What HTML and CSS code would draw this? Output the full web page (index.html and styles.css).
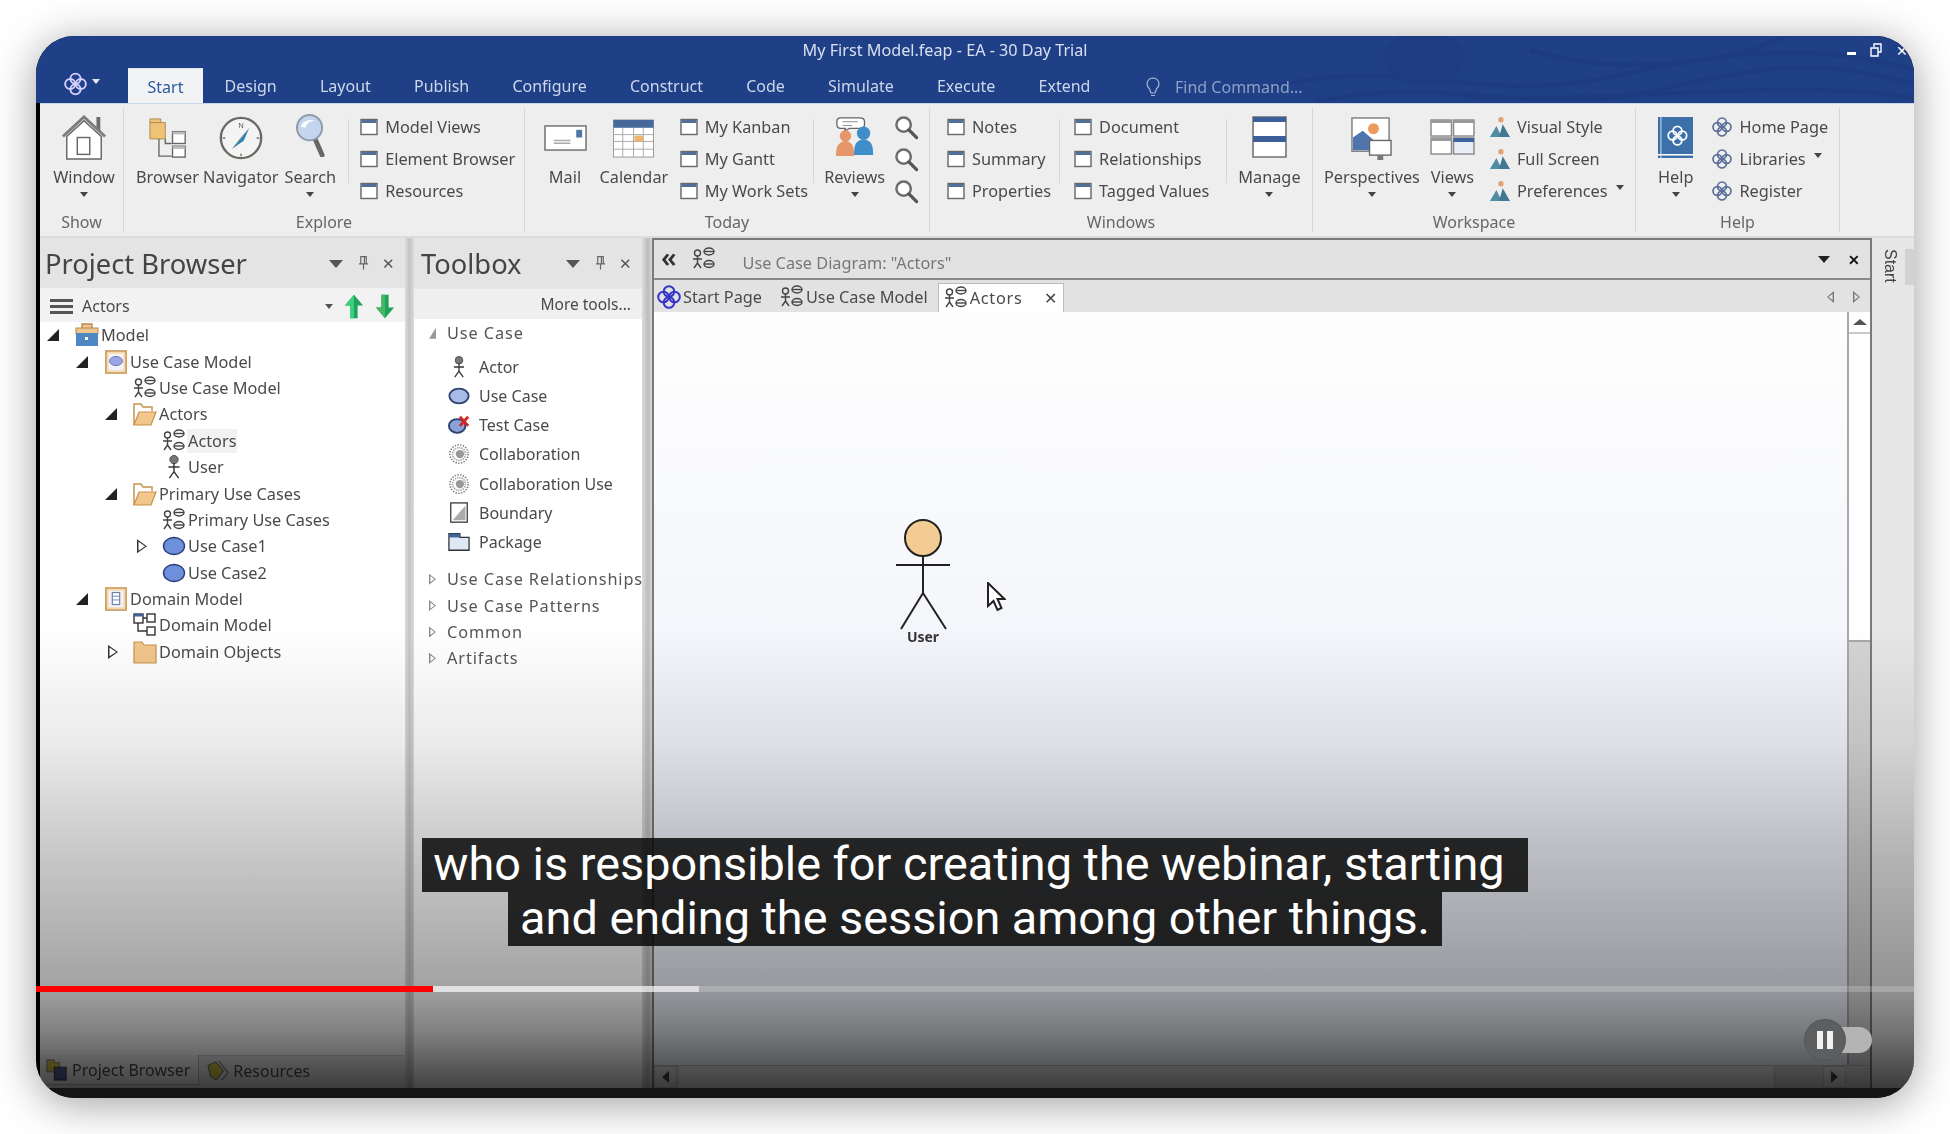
FILE: index.html
```html
<!DOCTYPE html>
<html lang="en">
<head>
<meta charset="utf-8">
<title>My First Model.feap - EA - 30 Day Trial</title>
<link rel="stylesheet" href="styles.css">
</head>
<body>
<svg class="sprite" xmlns="http://www.w3.org/2000/svg">
  <symbol id="logo" viewBox="0 0 24 24"><g fill="none" stroke="currentColor" stroke-width="2"><circle cx="12" cy="6.500" r="5.300"/><circle cx="17.500" cy="12" r="5.300"/><circle cx="12" cy="17.500" r="5.300"/><circle cx="6.500" cy="12" r="5.300"/></g></symbol>
  <symbol id="win" viewBox="0 0 18 18"><rect x="1" y="1.500" width="16" height="15" fill="#fff" stroke="#666" stroke-width="1.400"/><rect x="1.500" y="2" width="15" height="3" fill="#536f98"/></symbol>
  <symbol id="house" viewBox="0 0 48 48" preserveAspectRatio="none"><path d="M37 14V2h4v16z" fill="#6d6d6d"/><path d="M2 23 24 2 46 23" fill="none" stroke="#7d7d7d" stroke-width="3"/><path d="M6 23 24 6 42 23v24H6z" fill="#fff" stroke="#666" stroke-width="1.500"/><rect x="17" y="24" width="13" height="18" fill="#fff" stroke="#666" stroke-width="1.500"/></symbol>
  <symbol id="browser" viewBox="0 0 42 44" preserveAspectRatio="none"><path d="M1 1h12v4h5v18H1z" fill="#efc377" stroke="#a8854a"/><path d="M1 5h12" stroke="#a8854a"/><path d="M11 23v19h14M18 23v5h7" fill="none" stroke="#666" stroke-width="1.500"/><rect x="26" y="15" width="14" height="13" fill="#fff" stroke="#666" stroke-width="1.500"/><rect x="26" y="15" width="14" height="3" fill="#bbb"/><rect x="26" y="31" width="14" height="12" fill="#fff" stroke="#666" stroke-width="1.500"/><rect x="26" y="31" width="14" height="3" fill="#bbb"/></symbol>
  <symbol id="lens" viewBox="0 0 30 44" preserveAspectRatio="none"><path d="M20 26 27 42" stroke="#666" stroke-width="5" stroke-linecap="round"/><ellipse cx="14" cy="14" rx="13" ry="13" fill="#c4d6ee" stroke="#8f9aaa" stroke-width="2"/><path d="M5 13c2-6 9-8 15-6-5 0-9 2-10 7z" fill="#fff"/></symbol>
  <symbol id="mag" viewBox="0 0 26 26"><circle cx="10" cy="10" r="7.500" fill="#fff" stroke="#6d6d6d" stroke-width="2.600"/><path d="m15.500 15.500 8 8" stroke="#555" stroke-width="3.400" stroke-linecap="round"/></symbol>
  <symbol id="mail" viewBox="0 0 44 27" preserveAspectRatio="none"><rect x="1" y="1" width="42" height="25" fill="#fff" stroke="#777" stroke-width="1.600"/><rect x="33" y="5" width="6" height="8" fill="#4f74a8"/><path d="M10 16h17M10 19h17" stroke="#aaa" stroke-width="1.500"/></symbol>
  <symbol id="cal" viewBox="0 0 42 40" preserveAspectRatio="none"><rect x=".5" y="1" width="41" height="38" fill="#fff" stroke="#999"/><rect x=".5" y="1" width="41" height="8" fill="#46699c"/><path d="M.5 16h41M.5 23h41M.5 31h41M10 9v30M21 9v30M31 9v30" stroke="#aaa"/><rect x="22" y="17" width="9" height="6" fill="#eeb46c"/></symbol>
  <symbol id="reviews" viewBox="0 0 42 42" preserveAspectRatio="none"><path d="M6 1h20c3 0 5 1 5 4v3c0 3-2 4-5 4H15l-5 3 1-3H6c-2 0-4-1-4-4V5c0-3 2-4 4-4z" fill="#fff" stroke="#666" stroke-width="1.400"/><path d="M8 5h16M8 9h10" stroke="#888"/><circle cx="11" cy="20" r="6" fill="#e6966a"/><path d="M1 41c0-10 2-14 10-16 8 2 9 6 9 16z" fill="#e6966a"/><circle cx="30" cy="17" r="7" fill="#3f8ec9"/><path d="M20 40c0-12 2-15 10-17 8 2 10 5 10 17z" fill="#3f8ec9"/></symbol>
  <symbol id="manage" viewBox="0 0 34 42" preserveAspectRatio="none"><rect x="1" y="1" width="32" height="40" fill="#fff" stroke="#666" stroke-width="1.400"/><rect x="1" y="1" width="32" height="5" fill="#3d5f99"/><rect x="1" y="20" width="32" height="6" fill="#3d5f99"/></symbol>
  <symbol id="persp" viewBox="0 0 42 44" preserveAspectRatio="none"><rect x="1" y="1" width="38" height="34" fill="#fff" stroke="#777" stroke-width="1.400"/><circle cx="23" cy="12" r="5.600" fill="#eb995c"/><path d="M2 34V21l10-7 14 12v8z" fill="#4f74ad"/><rect x="19" y="24" width="22" height="15" fill="#fff" stroke="#666" stroke-width="1.400"/><rect x="27" y="39" width="6" height="5" fill="#777"/></symbol>
  <symbol id="views" viewBox="0 0 44 36" preserveAspectRatio="none"><g fill="#fff" stroke="#888" stroke-width="1.400"><rect x="1" y="1" width="20" height="16"/><rect x="23" y="1" width="20" height="16"/><rect x="1" y="19" width="20" height="16"/><rect x="23" y="19" width="20" height="16" fill="#e7eef8"/></g><g fill="#999"><rect x="1" y="1" width="20" height="3"/><rect x="23" y="1" width="20" height="3"/><rect x="1" y="19" width="20" height="3"/></g><rect x="23" y="19" width="20" height="4" fill="#3f639b"/></symbol>
  <symbol id="mount" viewBox="0 0 22 24"><circle cx="12" cy="4" r="3" fill="#e6a27a"/><path d="M0 23 7 11l6 12z" fill="#4e8da3"/><path d="M10 23 14 9l8 14z" fill="#3f7890"/></symbol>
  <symbol id="book" viewBox="0 0 36 42" preserveAspectRatio="none"><rect x="0" y="0" width="36" height="38" fill="#3d6fa8"/><rect x="0" y="38" width="36" height="1.500" fill="#fff"/><rect x="0" y="39.500" width="36" height="2.500" fill="#3d6fa8"/><rect x="2.500" y="0" width="1" height="42" fill="#d5e0ee"/><g fill="none" stroke="#fff" stroke-width="1.800"><circle cx="20" cy="14" r="4.500"/><circle cx="25" cy="19" r="4.500"/><circle cx="20" cy="24" r="4.500"/><circle cx="15" cy="19" r="4.500"/></g></symbol>
  <symbol id="pkg-model" viewBox="0 0 24 24"><path d="M7 5V1h10v4" fill="#edc78f" stroke="#b98a4e" stroke-width="1.400"/><rect x="1" y="5" width="22" height="6" fill="#edc78f" stroke="#b98a4e"/><rect x="1" y="10" width="22" height="13" fill="#4d88c2"/><rect x="10" y="14" width="3" height="3" fill="#fff"/></symbol>
  <symbol id="pkg-uc" viewBox="0 0 24 26"><rect x="1" y="1" width="22" height="24" fill="#f5d9ad" stroke="#c5965a" stroke-width="1.600"/><rect x="4" y="4" width="16" height="18" fill="#f4f4f8"/><ellipse cx="12" cy="12" rx="7" ry="5" fill="#9aa6e4" stroke="#6675bf"/></symbol>
  <symbol id="pkg-dm" viewBox="0 0 24 26"><rect x="1" y="1" width="22" height="24" fill="#f5d9ad" stroke="#c5965a" stroke-width="1.600"/><rect x="4" y="4" width="16" height="18" fill="#f4f4f8"/><rect x="8" y="6" width="8" height="13" fill="#fff" stroke="#6f82a9" stroke-width="1.300"/><path d="M8 10h8M8 14h8" stroke="#6f82a9"/></symbol>
  <symbol id="ucd" viewBox="0 0 24 24"><g fill="none" stroke="#444" stroke-width="1.400"><circle cx="5.500" cy="6" r="3"/><path d="M5.500 9v7M1 12h9M5.500 16 2 21M5.500 16 9 21"/><ellipse cx="17" cy="4.500" rx="5" ry="3.500"/><path d="M12 4.500h10"/><ellipse cx="17" cy="17" rx="5" ry="3.500"/><path d="M12 17h10"/></g></symbol>
  <symbol id="fold-open" viewBox="0 0 24 24"><path d="M1 23V2h7l2 3h9v4" fill="#fff" stroke="#c6924f" stroke-width="1.500"/><path d="M1 23 6 10h17l-5 13z" fill="#f2c68c" stroke="#c6924f" stroke-width="1.200"/></symbol>
  <symbol id="fold" viewBox="0 0 24 24"><path d="M1 23V2h8l2 3h12v18z" fill="#f2c68c" stroke="#c6924f" stroke-width="1.200"/></symbol>
  <symbol id="actor" viewBox="0 0 16 26"><circle cx="8" cy="5" r="4.500" fill="#777" stroke="#444"/><path d="M8 9v9M2 13h12M8 18 3 25M8 18l5 7" fill="none" stroke="#333" stroke-width="1.500"/></symbol>
  <symbol id="usecase" viewBox="0 0 24 20"><ellipse cx="12" cy="10" rx="10.500" ry="8.500" fill="#6e8fdc" stroke="#2a3b7a" stroke-width="1.400"/></symbol>
  <symbol id="usecase2" viewBox="0 0 24 20"><ellipse cx="12" cy="10" rx="10.500" ry="8" fill="#a8bbe6" stroke="#2c3f6e" stroke-width="2"/></symbol>
  <symbol id="testcase" viewBox="0 0 24 20"><ellipse cx="10" cy="11" rx="9" ry="7.500" fill="#8ca2d6" stroke="#2c3f6e" stroke-width="2"/><path d="m13 1 9 10M22 1l-9 10" stroke="#d42424" stroke-width="3"/></symbol>
  <symbol id="collab" viewBox="0 0 24 24"><circle cx="12" cy="12" r="10" fill="none" stroke="#777" stroke-width="1.600" stroke-dasharray="1.500 1.500"/><circle cx="12" cy="12" r="7" fill="none" stroke="#aaa" stroke-width="2" stroke-dasharray="1.500 1"/><circle cx="13" cy="12" r="4.500" fill="#999"/></symbol>
  <symbol id="bound" viewBox="0 0 20 24"><rect x="1" y="1" width="18" height="21" fill="#fff" stroke="#444" stroke-width="1.500"/><path d="M3 20 17 4v16z" fill="#aaa"/></symbol>
  <symbol id="pkg" viewBox="0 0 24 20"><path d="M1 1h12v4h10v14H1z" fill="#dfe8f5" stroke="#333" stroke-width="1.400"/><rect x="1" y="1" width="12" height="4" fill="#3f639b"/></symbol>
  <symbol id="dmd" viewBox="0 0 24 24"><g fill="#fff" stroke="#333" stroke-width="1.400"><rect x="1" y="1" width="9" height="9"/><rect x="14" y="1" width="8" height="8"/><rect x="14" y="14" width="8" height="8"/><path d="M5 10v8h9M10 5h4" fill="none"/></g><rect x="1" y="1" width="9" height="2.500" fill="#3f639b"/></symbol>
  <symbol id="up" viewBox="0 0 22 28"><path d="M11 1 21 13h-6v14H7V13H1z" fill="#1fa35a"/><path d="M11 1 1 13h6v14h4z" fill="#3bd07f"/></symbol>
  <symbol id="down" viewBox="0 0 22 28"><path d="M11 27 21 15h-6V1H7v14H1z" fill="#1fa35a"/><path d="M7 1v14H1l10 12V1z" fill="#46b866"/></symbol>
  <symbol id="pb" viewBox="0 0 24 24"><path d="M1 1h8v3h6v10H1z" fill="#d6c94a" stroke="#777"/><rect x="9" y="9" width="13" height="14" fill="#55609a" stroke="#333"/></symbol>
  <symbol id="res" viewBox="0 0 24 24"><path d="M1 6 10 2l8 10-8 10-6-4z" fill="#d6c94a" stroke="#555"/><path d="M13 1 23 14l-7 8" fill="none" stroke="#888" stroke-width="1.500"/></symbol>
</svg>

<main class="window">
  <header class="titlebar">
    <svg class="waves" viewBox="0 0 600 66" preserveAspectRatio="none"><g fill="none" stroke="#1c3b80" stroke-width="4"><path d="M0 50C120 20 200 70 320 40S520 10 600 34"/><path d="M40 66C160 36 240 84 360 54S520 26 600 48"/><path d="M240 14C320 40 420 30 480 0"/><path d="M180 60C300 70 480 40 600 62"/></g><ellipse cx="141" cy="22" rx="38" ry="28" fill="#1d3c82"/></svg>
    <div class="title-text">My First Model.feap - EA - 30 Day Trial</div>
    <div class="win-controls">
      <span class="wc-min"></span>
      <svg class="wc-res" viewBox="0 0 12 14"><path d="M4 4V1h7v8H8M1 5h7v8H1z" fill="none" stroke="#fff" stroke-width="1.400"/></svg>
      <span class="wc-x">✕</span>
    </div>
    <nav class="menu">
      <div class="app-btn"><svg class="app-logo"><use href="#logo"/></svg><span class="caret-w"></span></div>
      <a class="tab active">Start</a><a class="tab">Design</a><a class="tab">Layout</a><a class="tab">Publish</a><a class="tab">Configure</a><a class="tab">Construct</a><a class="tab">Code</a><a class="tab">Simulate</a><a class="tab">Execute</a><a class="tab">Extend</a>
      <div class="find">
        <svg class="bulb" viewBox="0 0 14 20"><path d="M7 1a6 6 0 0 0-3.500 10.800L5 16h4l1.500-4.200A6 6 0 0 0 7 1zM5 18.500h4" fill="none" stroke="#a8b8d6" stroke-width="1.200"/></svg>
        <span>Find Command...</span>
      </div>
    </nav>
  </header>

  <div class="app">
    <section class="ribbon">
      <div class="group g-show">
        <div class="gbody">
          <div class="big"><svg class="bi i-house"><use href="#house"/></svg><span>Window</span><i class="caret"></i></div>
        </div>
        <div class="glabel">Show</div>
      </div>
      <div class="group g-explore">
        <div class="gbody">
          <div class="big"><svg class="bi i-browser"><use href="#browser"/></svg><span>Browser</span></div>
          <div class="big"><svg class="bi i-compass" viewBox="0 0 48 48"><circle cx="24" cy="24" r="22" fill="#f4f4f4" stroke="#6b6b64" stroke-width="2.600"/><text x="24" y="13" font-size="8" text-anchor="middle" fill="#555" font-family="Noto Sans">N</text><path d="M33 13 23 24 14 36z" fill="#e6a23a"/><path d="M33 13 27 27 14 36z" fill="#2f86b5"/><path d="M4 24h3M41 24h3M24 41v3" stroke="#777" stroke-width="1.500"/></svg><span>Navigator</span></div>
          <div class="big"><svg class="bi i-lens"><use href="#lens"/></svg><span>Search</span><i class="caret"></i></div>
          <div class="vsep"></div>
          <div class="col">
            <div class="sm"><svg class="si"><use href="#win"/></svg><span>Model Views</span></div>
            <div class="sm"><svg class="si"><use href="#win"/></svg><span>Element Browser</span></div>
            <div class="sm"><svg class="si"><use href="#win"/></svg><span>Resources</span></div>
          </div>
        </div>
        <div class="glabel">Explore</div>
      </div>
      <div class="group g-today">
        <div class="gbody">
          <div class="big wide"><svg class="bi i-mail"><use href="#mail"/></svg><span>Mail</span></div>
          <div class="big wide"><svg class="bi i-cal"><use href="#cal"/></svg><span>Calendar</span></div>
          <div class="col col-today">
            <div class="sm"><svg class="si"><use href="#win"/></svg><span>My Kanban</span></div>
            <div class="sm"><svg class="si"><use href="#win"/></svg><span>My Gantt</span></div>
            <div class="sm"><svg class="si"><use href="#win"/></svg><span>My Work Sets</span></div>
          </div>
          <div class="vsep sep-today"></div>
          <div class="big"><svg class="bi i-reviews"><use href="#reviews"/></svg><span>Reviews</span><i class="caret"></i></div>
          <div class="col mags">
            <div class="sm"><svg class="mi"><use href="#mag"/></svg></div>
            <div class="sm"><svg class="mi"><use href="#mag"/></svg></div>
            <div class="sm"><svg class="mi"><use href="#mag"/></svg></div>
          </div>
        </div>
        <div class="glabel">Today</div>
      </div>
      <div class="group g-windows">
        <div class="gbody">
          <div class="col">
            <div class="sm"><svg class="si"><use href="#win"/></svg><span>Notes</span></div>
            <div class="sm"><svg class="si"><use href="#win"/></svg><span>Summary</span></div>
            <div class="sm"><svg class="si"><use href="#win"/></svg><span>Properties</span></div>
          </div>
          <div class="vsep sep-win1"></div>
          <div class="col">
            <div class="sm"><svg class="si"><use href="#win"/></svg><span>Document</span></div>
            <div class="sm"><svg class="si"><use href="#win"/></svg><span>Relationships</span></div>
            <div class="sm"><svg class="si"><use href="#win"/></svg><span>Tagged Values</span></div>
          </div>
          <div class="vsep sep-win2"></div>
          <div class="big"><svg class="bi i-manage"><use href="#manage"/></svg><span>Manage</span><i class="caret"></i></div>
        </div>
        <div class="glabel">Windows</div>
      </div>
      <div class="group g-workspace">
        <div class="gbody">
          <div class="big"><svg class="bi i-persp"><use href="#persp"/></svg><span>Perspectives</span><i class="caret"></i></div>
          <div class="big big-views"><svg class="bi i-views"><use href="#views"/></svg><span>Views</span><i class="caret"></i></div>
          <div class="col col-mount">
            <div class="sm"><svg class="si si-m"><use href="#mount"/></svg><span>Visual Style</span></div>
            <div class="sm"><svg class="si si-m"><use href="#mount"/></svg><span>Full Screen</span></div>
            <div class="sm"><svg class="si si-m"><use href="#mount"/></svg><span>Preferences</span><i class="caret caret-sm"></i></div>
          </div>
        </div>
        <div class="glabel">Workspace</div>
      </div>
      <div class="group g-help">
        <div class="gbody">
          <div class="big"><svg class="bi i-book"><use href="#book"/></svg><span>Help</span><i class="caret"></i></div>
          <div class="col col-help">
            <div class="sm"><svg class="si si-l"><use href="#logo"/></svg><span>Home Page</span></div>
            <div class="sm"><svg class="si si-l"><use href="#logo"/></svg><span>Libraries</span><i class="caret caret-sm"></i></div>
            <div class="sm"><svg class="si si-l"><use href="#logo"/></svg><span>Register</span></div>
          </div>
        </div>
        <div class="glabel">Help</div>
      </div>
    </section>

    <section class="workspace">
      <aside class="panel pb">
        <div class="ptitle"><h2>Project Browser</h2><i class="caret caret-lg"></i><svg class="pin" viewBox="0 0 12 16"><path d="M3 1h6v8H3zM1 9h10M6 9v6M7 1v8" fill="none" stroke="#666" stroke-width="1.300"/></svg><span class="px">✕</span></div>
        <div class="pb-bar">
          <span class="burger"></span><span class="pb-name">Actors</span><i class="caret caret-sm2"></i>
          <svg class="arrow"><use href="#up"/></svg><svg class="arrow"><use href="#down"/></svg>
        </div>
        <div class="tree">
          <div class="row l0"><i class="tri open"></i><svg class="ti"><use href="#pkg-model"/></svg><span>Model</span></div>
          <div class="row l1"><i class="tri open"></i><svg class="ti"><use href="#pkg-uc"/></svg><span>Use Case Model</span></div>
          <div class="row l2"><i class="tri"></i><svg class="ti"><use href="#ucd"/></svg><span>Use Case Model</span></div>
          <div class="row l2"><i class="tri open"></i><svg class="ti"><use href="#fold-open"/></svg><span>Actors</span></div>
          <div class="row l3"><i class="tri"></i><svg class="ti"><use href="#ucd"/></svg><span class="sel">Actors</span></div>
          <div class="row l3"><i class="tri"></i><svg class="ti"><use href="#actor"/></svg><span>User</span></div>
          <div class="row l2"><i class="tri open"></i><svg class="ti"><use href="#fold-open"/></svg><span>Primary Use Cases</span></div>
          <div class="row l3"><i class="tri"></i><svg class="ti"><use href="#ucd"/></svg><span>Primary Use Cases</span></div>
          <div class="row l3"><i class="tri closed"></i><svg class="ti"><use href="#usecase"/></svg><span>Use Case1</span></div>
          <div class="row l3"><i class="tri"></i><svg class="ti"><use href="#usecase"/></svg><span>Use Case2</span></div>
          <div class="row l1"><i class="tri open"></i><svg class="ti"><use href="#pkg-dm"/></svg><span>Domain Model</span></div>
          <div class="row l2"><i class="tri"></i><svg class="ti"><use href="#dmd"/></svg><span>Domain Model</span></div>
          <div class="row l2"><i class="tri closed"></i><svg class="ti"><use href="#fold"/></svg><span>Domain Objects</span></div>
        </div>
        <div class="pb-tabs">
          <div class="pb-tab on"><svg class="bt"><use href="#pb"/></svg><span>Project Browser</span></div>
          <div class="pb-tab"><svg class="bt"><use href="#res"/></svg><span>Resources</span></div>
        </div>
      </aside>
      <div class="splitter"></div>
      <aside class="panel tb">
        <div class="ptitle"><h2>Toolbox</h2><i class="caret caret-lg"></i><svg class="pin" viewBox="0 0 12 16"><path d="M3 1h6v8H3zM1 9h10M6 9v6M7 1v8" fill="none" stroke="#666" stroke-width="1.300"/></svg><span class="px">✕</span></div>
        <div class="tb-more">More tools...</div>
        <div class="tb-list">
          <div class="tb-sec first"><i class="stri down"></i><span>Use Case</span></div>
          <div class="tb-item"><svg class="tbi"><use href="#actor"/></svg><span>Actor</span></div>
          <div class="tb-item"><svg class="tbi"><use href="#usecase2"/></svg><span>Use Case</span></div>
          <div class="tb-item"><svg class="tbi"><use href="#testcase"/></svg><span>Test Case</span></div>
          <div class="tb-item"><svg class="tbi"><use href="#collab"/></svg><span>Collaboration</span></div>
          <div class="tb-item"><svg class="tbi"><use href="#collab"/></svg><span>Collaboration Use</span></div>
          <div class="tb-item"><svg class="tbi"><use href="#bound"/></svg><span>Boundary</span></div>
          <div class="tb-item"><svg class="tbi"><use href="#pkg"/></svg><span>Package</span></div>
          <div class="tb-sec gap"><i class="stri"></i><span>Use Case Relationships</span></div>
          <div class="tb-sec"><i class="stri"></i><span>Use Case Patterns</span></div>
          <div class="tb-sec"><i class="stri"></i><span>Common</span></div>
          <div class="tb-sec"><i class="stri"></i><span>Artifacts</span></div>
        </div>
      </aside>
      <div class="splitter sp2"></div>
      <section class="diagram">
        <div class="d-head">
          <span class="chev">«</span><svg class="di"><use href="#ucd"/></svg>
          <span class="d-title">Use Case Diagram: "Actors"</span>
          <i class="caret caret-d"></i><span class="d-x">✕</span>
        </div>
        <div class="d-tabs">
          <div class="d-tab"><svg class="logo-tab"><use href="#logo"/></svg><span>Start Page</span></div>
          <div class="d-tab"><svg class="di"><use href="#ucd"/></svg><span>Use Case Model</span></div>
          <div class="d-tab on"><svg class="di"><use href="#ucd"/></svg><span>Actors</span><b>✕</b></div>
          <div class="d-nav"><i class="ntri l"></i><i class="ntri r"></i></div>
        </div>
        <div class="d-main">
          <div class="canvas">
            <div class="node">
              <svg class="actor-big" viewBox="0 0 60 114"><circle cx="30" cy="20" r="18" fill="#f3cc94" stroke="#222" stroke-width="2"/><path d="M30 38v37M3 47h54M30 75 8 111M30 75l23 36" fill="none" stroke="#222" stroke-width="2"/></svg>
              <span>User</span>
            </div>
            <svg class="cursor" viewBox="0 0 20 30"><path d="M2 1v23l5.500-5 4 9 4-2-4-9h7z" fill="#fff" stroke="#222" stroke-width="2"/></svg>
          </div>
          <div class="vscroll"><div class="sb-up"><i></i></div><div class="sb-thumb"></div><div class="sb-rest"></div></div>
        </div>
        <div class="hscroll"><div class="hb"><i class="hl"></i></div><div class="h-track"></div><div class="h-fill"></div><div class="hb"><i class="hr"></i></div><div class="h-corner"></div></div>
      </section>
      <aside class="strip"><span class="strip-text">Start</span><span class="strip-tab"></span></aside>
    </section>
  </div>
  <div class="black"></div>

  <div class="shade"></div>
  <div class="captions">
    <span>who is responsible for creating the webinar, starting</span>
    <span>and ending the session among other things.</span>
  </div>
  <div class="progress"><div class="loaded"></div><div class="played"></div></div>
  <div class="toggle"><span class="knob"><i></i><i></i></span></div>
</main>
</body>
</html>
```

FILE: styles.css
```css
* { box-sizing: border-box; }
html, body { margin: 0; height: 100%; }
body { background: #fff; padding: 36px; font-family: "Noto Sans", "Open Sans", sans-serif; color: #4a4a4a; overflow: hidden; }
.sprite { position: absolute; width: 0; height: 0; }
svg { display: block; flex: none; }

.window { position: relative; width: 1878px; height: 1062px; border-radius: 38px; overflow: hidden; background: #000; box-shadow: 0 6px 44px rgba(0,0,0,.38); display: flex; flex-direction: column; }

/* title bar */
.titlebar { position: relative; height: 67px; background: #1f3f87; color: #d8e0ef; flex: none; }
.waves { position: absolute; right: 0; top: 0; width: 640px; height: 66px; }
.title-text { position: relative; height: 32px; line-height: 28px; text-align: center; font-size: 16.2px; margin: 0 120px 0 60px; filter: blur(.5px); }
.win-controls { position: absolute; top: 4px; right: 6px; display: flex; align-items: center; gap: 14px; height: 20px; }
.wc-min { width: 9px; height: 3px; background: #fff; margin-top: 6px; }
.wc-res { width: 12px; height: 14px; }
.wc-x { font-size: 14px; color: #fff; }
.menu { position: relative; display: flex; height: 35px; align-items: stretch; filter: blur(.5px); }
.app-btn { width: 92px; display: flex; align-items: center; padding-left: 28px; gap: 5px; padding-bottom: 4px; }
.app-logo { width: 23px; height: 24px; color: #d4d0ff; }
.caret-w { width: 0; height: 0; border: 4px solid transparent; border-top: 5px solid #e6e9f2; border-bottom: 0; margin-bottom: 4px; }
.tab { padding: 0 21.6px; line-height: 37px; font-size: 16px; color: #cdd7ea; }
.tab.active { background: #f1f3f5; color: #2c5aa0; padding: 0 19.5px; border-top: 1px solid #dfe5ee; }
.find { display: flex; align-items: center; margin-left: 34px; font-size: 16px; color: #8ea0c6; gap: 15px; padding-top: 2px; }
.bulb { width: 14px; height: 20px; }

.app { flex: 1; min-height: 0; display: flex; flex-direction: column; margin-left: 4px; background: #e6e6e6; border-top: 1px solid #c6d5ea; filter: blur(.5px); }

/* ribbon */
.ribbon { height: 134px; display: flex; background: #eeeeee; border-bottom: 2px solid #dcdcdc; flex: none; padding-top: 4px; }
.group { display: flex; flex-direction: column; border-right: 1px solid #d6d6d6; margin-bottom: 4px; }
.g-show { width: 84px; }
.g-explore { width: 401px; }
.g-today { width: 405px; }
.g-windows { width: 383px; }
.g-workspace { width: 323px; }
.g-help { width: 204px; }
.gbody { flex: 1; min-height: 0; display: flex; padding-top: 4px; font-size: 16.3px; }
.g-show .gbody { justify-content: center; padding-left: 5px; }
.g-explore .gbody { padding-left: 9px; }
.g-explore .big { padding: 0 3px; }
.g-explore .big:first-child { padding-right: 1px; }
.g-today .gbody { padding-left: 12px; }
.g-windows .gbody { padding-left: 17px; }
.g-workspace .gbody { padding-left: 7px; }
.g-help .gbody { padding-left: 18px; }
.glabel { height: 25px; text-align: center; font-size: 16px; line-height: 30px; color: #666; flex: none; }
.big { display: flex; flex-direction: column; align-items: center; padding: 0 4px; white-space: nowrap; line-height: 20px; }
.big.wide { padding: 0 6.5px; }
.big-views { margin-left: 2px; }
.bi { height: 55px; }
.big span { display: block; }
.i-house { width: 46px; padding: 3px 0 7px; }
.i-browser { width: 38px; padding: 6px 0 9px; }
.i-compass { width: 44px; padding: 4px 0 7px; }
.i-lens { width: 29px; padding: 2px 0 10px; }
.i-mail { width: 43px; padding: 13px 0 16px; }
.i-cal { width: 41px; padding: 7px 0 9px; }
.i-reviews { width: 40px; padding: 5px 0 10px; }
.i-manage { width: 35px; padding: 4px 0 9px; }
.i-persp { width: 41px; padding: 5px 0 7px; }
.i-views { width: 45px; padding: 7px 0 12px; }
.i-book { width: 35px; padding: 5px 0 9px; }
.caret { display: block; width: 0; height: 0; border: 4px solid transparent; border-top: 5px solid #444; border-bottom: 0; margin-top: 5px; }
.caret-sm { margin: 0 0 8px 1px; }
.vsep { width: 1px; background: #d6d6d6; margin: 7px 11px 24px 9px; flex: none; }
.sep-today { margin-left: 5px; margin-right: 6px; }
.sep-win1 { margin-left: 8px; margin-right: 14px; }
.sep-win2 { margin-left: 17px; margin-right: 7px; }
.col { display: flex; flex-direction: column; margin-top: -1px; }
.col-today { margin-left: 5px; }
.sm { height: 32px; display: flex; align-items: center; gap: 7px; white-space: nowrap; }
.si { width: 18px; height: 18px; }
.si-m { width: 20px; height: 22px; }
.si-l { width: 20px; height: 24px; color: #5a6d96; }
.mi { width: 25px; height: 25px; }
.mags { margin-left: 5px; }
.col-mount { margin-left: 11px; }
.col-help { margin-left: 15px; }

/* panels */
.workspace { flex: 1; min-height: 0; display: flex; background: #e6e6e6; }
.panel { display: flex; flex-direction: column; flex: none; }
.pb { width: 365px; }
.tb { width: 228px; }
.splitter { width: 9px; flex: none; background: linear-gradient(90deg,#dcdcdc,#c4c4c4 50%,#dcdcdc); }
.sp2 { width: 10px; background: linear-gradient(90deg,#dcdcdc,#bcbcbc 60%,#d8d8d8); }
.ptitle { height: 50px; display: flex; align-items: center; background: #e4e4e4; padding: 0 10px 0 5px; flex: none; }
.tb .ptitle { padding-left: 7px; padding-right: 10px; }
.ptitle h2 { margin: 0; font-size: 27.3px; font-weight: 400; color: #444; flex: 1; }
.caret-lg { border-width: 7px; border-top-width: 8px; margin: 2px 15px 0 0; border-top-color: #555; }
.pin { width: 11px; height: 16px; margin-right: 13px; }
.px { font-size: 15px; color: #555; }
.pb-bar { height: 34px; display: flex; align-items: center; background: #f2f2f2; padding: 2px 10px 0 10px; font-size: 16px; flex: none; }
.burger { width: 23px; height: 15px; border-top: 3px solid #555; border-bottom: 3px solid #555; position: relative; background: linear-gradient(#555,#555) center/100% 3px no-repeat; }
.pb-name { flex: 1; margin-left: 9px; }
.caret-sm2 { margin: 0; border-top-color: #555; }
.arrow { width: 20px; height: 27px; margin-left: 11px; }
.arrow:last-child { margin-left: 11px; }
.tree { flex: 1; background: #fff; font-size: 16.3px; }
.row { height: 26.4px; display: flex; align-items: center; white-space: nowrap; }
.l0 { padding-left: 7px; }
.l1 { padding-left: 36px; }
.l2 { padding-left: 65px; }
.l3 { padding-left: 94px; }
.tri { width: 28px; flex: none; display: block; }
.tri.open::before { content: ""; display: block; width: 0; height: 0; border-left: 12px solid transparent; border-bottom: 12px solid #222; }
.tri.closed::before { content: ""; display: block; width: 10px; height: 14px; margin-left: 3px; background: #333; clip-path: polygon(0 0, 100% 50%, 0 100%, 0 0, 15% 18%, 15% 82%, 82% 50%, 15% 18%); }
.ti { width: 24px; height: 24px; margin-right: 2px; }
.sel { background: #f2f2f2; padding: 1px 1px; margin: 0 -1px; }
.pb-tabs { height: 33px; display: flex; background: #eaeaea; border-top: 1px solid #cfcfcf; flex: none; padding-bottom: 3px; }
.pb-tab { display: flex; align-items: center; gap: 4px; padding: 0 8px 0 6px; font-size: 16px; }
.pb-tab:last-child { padding-left: 8px; }
.pb-tab.on { background: #f6f6f6; border-right: 1px solid #bbb; border-bottom: 1px solid #bbb; margin-top: -1px; }
.bt { width: 22px; height: 24px; }

.tb-more { height: 30px; line-height: 30px; text-align: right; padding-right: 11px; font-size: 15.5px; background: #efefef; flex: none; margin-top: 1px; }
.tb-list { flex: 1; background: #fff; padding-top: 1px; overflow: hidden; }
.tb-sec { height: 26.4px; display: flex; align-items: center; font-size: 16.3px; letter-spacing: .9px; white-space: nowrap; color: #555; }
.tb-sec.first { margin-bottom: 5.5px; }
.tb-sec.gap { margin-top: 9px; }
.stri { width: 33px; flex: none; display: block; }
.stri::before { content: ""; display: block; margin-left: 15px; width: 7px; height: 11px; background: #888; clip-path: polygon(0 0, 100% 50%, 0 100%, 0 0, 20% 22%, 20% 78%, 78% 50%, 20% 22%); }
.stri.down::before { clip-path: polygon(100% 0, 100% 100%, 0 100%); background: #999; }
.tb-item { height: 29.3px; display: flex; align-items: center; font-size: 16px; }
.tbi { width: 22px; height: 22px; margin: 0 9px 0 34px; }

/* diagram */
.diagram { width: 1220px; flex: none; display: flex; flex-direction: column; border-left: 2px solid #7a7a7a; border-right: 2px solid #7a7a7a; border-top: 2px solid #7a7a7a; background: #e2e2e2; }
.d-head { height: 40px; display: flex; align-items: center; background: #e2e2e2; border-bottom: 2px solid #8a8a8a; padding: 0 10px 0 7px; flex: none; }
.chev { font-size: 27px; font-weight: 600; color: #333; line-height: 1; margin-right: 15px; margin-top: -5px; }
.di { width: 24px; height: 24px; }
.d-title { flex: 1; margin: 7px 0 0 27px; font-size: 16.3px; color: #777; }
.caret-d { border-width: 6px; border-top-width: 7px; border-top-color: #222; margin: 0 18px 0 0; }
.d-x { font-size: 14px; font-weight: 700; color: #111; }
.d-tabs { height: 32px; display: flex; background: #e2e2e2; font-size: 16.3px; flex: none; position: relative; padding-top: 2px; }
.d-tab { display: flex; align-items: center; padding: 0 13px 0 3px; gap: 2px; white-space: nowrap; }
.d-tab:nth-child(2) { padding-left: 5px; padding-right: 10px; }
.d-tab.on { background: #fff; border: 1px solid #bbb; border-bottom: 0; margin-top: 1px; padding: 0 0 0 5px; width: 126px; letter-spacing: .7px; }
.d-tab.on b { font-weight: 400; font-size: 16px; margin-left: 20px; color: #444; }
.logo-tab { width: 24px; height: 26px; color: #3434c8; }
.d-nav { margin-left: auto; display: flex; align-items: center; gap: 19px; padding-right: 10px; }
.ntri { display: block; width: 7px; height: 12px; background: #777; }
.ntri.l { clip-path: polygon(100% 0, 0 50%, 100% 100%, 100% 0, 80% 22%, 80% 78%, 22% 50%, 80% 22%); }
.ntri.r { clip-path: polygon(0 0, 100% 50%, 0 100%, 0 0, 20% 22%, 20% 78%, 78% 50%, 20% 22%); }
.d-main { flex: 1; min-height: 0; display: flex; background: #fff; }
.canvas { flex: 1; position: relative; background: linear-gradient(#fefefe, #eef1f9 70%); }
.node { position: absolute; left: 239px; top: 206px; width: 60px; display: flex; flex-direction: column; align-items: center; }
.actor-big { width: 60px; height: 114px; }
.node span { font-size: 14px; font-weight: 700; color: #333; margin-top: -5px; }
.cursor { position: absolute; left: 332px; top: 270px; width: 20px; height: 30px; }
.vscroll { width: 23px; display: flex; flex-direction: column; border-left: 2px solid #a8a8a8; flex: none; }
.sb-up { height: 22px; background: #fff; border-bottom: 2px solid #c8c8c8; display: flex; align-items: center; justify-content: center; flex: none; }
.sb-up i { display: block; width: 0; height: 0; border: 7px solid transparent; border-bottom: 6px solid #555; border-top: 0; }
.sb-thumb { height: 308px; background: #fff; border-bottom: 2px solid #a8a8a8; flex: none; }
.sb-rest { flex: 1; background: #d4d4d4; }
.hscroll { height: 23px; display: flex; background: #d8d8d8; border-top: 1px solid #bbb; flex: none; }
.hb { width: 23px; background: #e2e2e2; border: 1px solid #c4c4c4; display: flex; align-items: center; justify-content: center; flex: none; }
.hl { display: block; width: 0; height: 0; border: 6px solid transparent; border-right: 7px solid #444; border-left: 0; }
.hr { display: block; width: 0; height: 0; border: 6px solid transparent; border-left: 7px solid #444; border-right: 0; }
.h-track { width: 1096px; background: #e9e9e9; border-right: 1px solid #bbb; flex: none; margin-left: 2px; }
.h-fill { flex: 1; }
.h-corner { width: 24px; flex: none; }
.strip { flex: 1; background: #e6e6e6; position: relative; padding: 11px 0 0 9px; }
.strip-text { display: block; writing-mode: vertical-rl; font-size: 16px; color: #444; font-family: "Liberation Sans", sans-serif; }
.strip-tab { position: absolute; right: 0; top: 11px; width: 9px; height: 36px; background: #d2d2d2; }

.black { height: 10px; background: #141414; flex: none; }

/* player overlays */
.shade { position: absolute; left: 0; right: 0; top: 590px; height: 462px; background: linear-gradient(rgba(0,0,0,0) 0%, rgba(0,0,0,.08) 25%, rgba(0,0,0,.22) 50%, rgba(0,0,0,.36) 78%, rgba(0,0,0,.5) 88%, rgba(0,0,0,.74) 100%); pointer-events: none; }
.captions { position: absolute; left: 0; right: 0; top: 802px; display: flex; flex-direction: column; align-items: center; font-family: Roboto, sans-serif; font-size: 46.8px; color: #fff; }
.captions span { display: block; height: 54px; line-height: 53px; background: rgba(8,8,8,.85); padding: 0 23px 0 11px; white-space: nowrap; }
.captions span:last-child { padding: 0 12px; }
.progress { position: absolute; left: 0; right: 0; top: 950px; height: 6px; background: rgba(255,255,255,.2); }
.loaded { position: absolute; left: 0; top: 0; bottom: 0; width: 663px; background: rgba(255,255,255,.6); }
.played { position: absolute; left: 0; top: 0; bottom: 0; width: 397px; background: #f00; }
.toggle { position: absolute; left: 1769px; top: 991px; width: 67px; height: 26px; border-radius: 13px; background: #b4b4b4; }
.knob { position: absolute; left: 0; top: -7px; width: 40px; height: 40px; border-radius: 50%; background: #5c5e60; box-shadow: 0 0 0 1px #555; display: flex; align-items: center; justify-content: center; gap: 4px; }
.knob i { display: block; width: 6px; height: 18px; background: #f2f2f2; }
```
